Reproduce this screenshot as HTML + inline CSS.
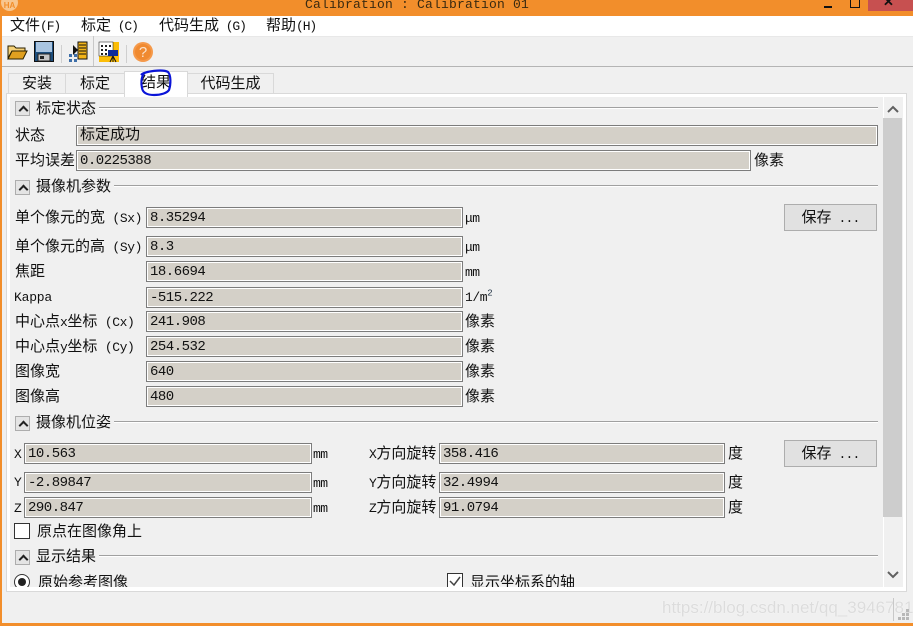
<!DOCTYPE html>
<html><head><meta charset="utf-8">
<style>
html,body{margin:0;padding:0;width:913px;height:626px;overflow:hidden;background:#f0f0f0}
*{box-sizing:border-box}
body{position:relative;font-family:"Liberation Mono","WenQuanYi Zen Hei","Noto Sans CJK SC",monospace;font-size:15px;color:#111}
.a{position:absolute;white-space:nowrap;line-height:28px;transform:translateY(2px)}
.a.n{line-height:26px;transform:translateY(1px)}
.a.z{transform:none}
.e{font-size:13px;letter-spacing:-.4px}
.f{position:absolute;background:#d4d0c8;border:1px solid #7c7c7c;box-shadow:inset 0 0 0 1px #fff;height:21px;padding-left:3px;line-height:20px;font-size:14px;white-space:nowrap;letter-spacing:-.5px}
.f.c{font-size:15px;letter-spacing:0}
.b{position:absolute;width:15px;height:15px;background:#e4e4e4;border:1px solid #adadad}
.b:after{content:"";position:absolute;left:4px;top:5px;width:5px;height:5px;border-left:2px solid #222;border-top:2px solid #222;transform:rotate(45deg)}
.l{position:absolute;height:2px;background:linear-gradient(#a0a0a0 50%,#fff 50%)}
.btn{position:absolute;left:784px;width:93px;height:27px;background:#e1e1e1;border:1px solid #adadad;text-align:center;line-height:27px;font-size:15px;white-space:nowrap}
.btn span{font-size:13px;letter-spacing:-.8px}
.t{position:absolute;top:73px;height:21px;background:#f0f0f0;border:1px solid #d9d9d9;border-bottom:0;text-align:center;line-height:21px;font-size:15px}
.u{font-size:13px;letter-spacing:-.5px}
.m{font-size:13px;letter-spacing:-1.100px}
</style></head><body>
<!-- window frame -->
<div style="position:absolute;left:0;top:0;width:913px;height:16px;background:#f28e2b"></div>
<div style="position:absolute;left:0;top:0;width:2px;height:626px;background:#f28e2b"></div>
<div style="position:absolute;left:0;top:623px;width:913px;height:3px;background:#f28e2b"></div>
<div style="position:absolute;left:2px;top:16px;width:911px;height:20px;background:#fff"></div>
<div style="position:absolute;left:2px;top:36px;width:911px;height:1px;background:#e8e8e8"></div>
<div style="position:absolute;left:2px;top:66px;width:911px;height:1px;background:#b4b4b4"></div>
<div style="position:absolute;left:1px;top:-6px;width:17px;height:17px;border-radius:50%;background:#f8c68e;color:#f28e2b;font:bold 8px/17px 'Liberation Sans',sans-serif;text-align:center"><span style="position:relative;top:3px">HA</span></div>
<div class="a z" style="left:305px;top:-7px;line-height:24px;font-size:13px;color:#3a2a10;letter-spacing:.2px">Calibration : Calibration 01</div>
<div style="position:absolute;left:824px;top:6px;width:8px;height:2px;background:#111"></div>
<div style="position:absolute;left:850px;top:-2px;width:10px;height:10px;border:1px solid #111"></div>
<div style="position:absolute;left:868px;top:0;width:45px;height:11px;background:#c75050;color:#111;text-align:center;font:bold 13px/8px 'Liberation Sans',sans-serif;overflow:hidden"><span style="position:relative;top:-2px;left:-2px">✕</span></div>
<!-- menu -->
<div class="a n" style="left:10px;top:13px">文件<span class="m">(F)</span></div>
<div class="a n" style="left:81px;top:13px">标定<span class="m"> (C)</span></div>
<div class="a n" style="left:159px;top:13px">代码生成<span class="m"> (G)</span></div>
<div class="a n" style="left:266px;top:13px">帮助<span class="m">(H)</span></div>
<!-- toolbar -->
<svg style="position:absolute;left:0;top:36px" width="170" height="30">
<path d="M8 22V10h6l2 2h9v3H12l-4 7z" fill="#f5d178" stroke="#2a2000"/>
<path d="M8 23l4-8h15l-4 8z" fill="#e0a020" stroke="#2a2000"/>
<rect x="34.500" y="5.500" width="19" height="20" fill="#1d4e7d" stroke="#111"/>
<rect x="36" y="6" width="16" height="10" fill="#a9c4e0"/>
<rect x="38" y="18" width="12" height="7" fill="#c6c6c6" stroke="#222"/>
<rect x="40" y="20" width="4" height="3" fill="#222"/>
<rect x="61" y="9" width="1" height="18" fill="#cfcfcf"/>
<rect x="78" y="6" width="9" height="17" fill="#f3b51a" stroke="#111"/>
<path d="M79 9h7M79 12h7M79 15h7M79 18h7" stroke="#111"/>
<path d="M73 9l5 5-5 5z" fill="#111"/>
<path d="M69 18h3v3h-3zM74 18h3v3h-3zM69 23h3v3h-3zM74 23h3v3h-3z" fill="#3d6ea8"/>
<rect x="93" y="0" width="1" height="30" fill="#c8c8c8"/>
<rect x="99" y="6" width="20" height="20" fill="#fbbd08"/>
<rect x="99" y="6" width="14" height="14" fill="#fff" stroke="#111" stroke-width=".5"/>
<path d="M101 9h2v2h-2zM105 9h2v2h-2zM109 9h2v2h-2zM101 13h2v2h-2zM105 13h2v2h-2zM101 17h2v2h-2zM105 17h2v2h-2z" fill="#222"/>
<rect x="108" y="14" width="10" height="6" fill="#0a2a9a"/>
<path d="M113 20l-3 6M113 20l3 6M113 20v6" stroke="#111"/>
<rect x="126" y="9" width="1" height="18" fill="#cfcfcf"/>
<circle cx="143" cy="16" r="10" fill="#f5994a"/>
<circle cx="143" cy="16" r="8" fill="#f08a30"/>
<text x="143" y="21" font-family="Liberation Sans" font-size="15" fill="#fbe3cc" text-anchor="middle">?</text>
</svg>
<!-- tabs -->
<div class="t" style="left:8px;width:58px">安装</div>
<div class="t" style="left:65px;width:60px">标定</div>
<div class="t" style="left:187px;width:87px">代码生成</div>
<!-- pane -->
<div style="position:absolute;left:6px;top:93px;width:901px;height:499px;background:#fff;border:1px solid #d9d9d9"></div>
<div style="position:absolute;left:10px;top:97px;width:893px;height:490px;background:#f0f0f0;overflow:hidden" id="c"></div>
<div class="t" style="left:124px;width:64px;top:71px;height:26px;background:#fff;line-height:24px">结果</div>
<svg style="position:absolute;left:135px;top:66px" width="40" height="34"><path d="M6 9C10 5 28 3 33 6c3 3 3 12 1 18-2 3-8 5-15 5-5 0-11-1-12-7-1-4-1-10 2-15" fill="none" stroke="#0a14d8" stroke-width="2.200"/></svg>
<!-- scrollbar -->
<div style="position:absolute;left:883px;top:97px;width:20px;height:490px;background:#f0f0f0;border-left:1px solid #fff"></div>
<div style="position:absolute;left:883px;top:118px;width:19px;height:399px;background:#cdcdcd"></div>
<svg style="position:absolute;left:883px;top:97px" width="20" height="490"><path d="M5 15l5-5 5 5" fill="none" stroke="#606060" stroke-width="2"/><path d="M5 475l5 5 5-5" fill="none" stroke="#606060" stroke-width="2"/></svg>
<!-- section 1 -->
<div class="b" style="left:15px;top:101px"></div>
<div class="a" style="left:36px;top:94px">标定状态</div>
<div class="l" style="left:99px;top:107px;width:779px"></div>
<div class="a" style="left:15px;top:121px">状态</div>
<div class="f c" style="left:76px;top:125px;width:802px">标定成功</div>
<div class="a" style="left:15px;top:146px">平均误差</div>
<div class="f" style="left:76px;top:150px;width:675px">0.0225388</div>
<div class="a" style="left:754px;top:146px">像素</div>
<!-- section 2 -->
<div class="b" style="left:15px;top:180px"></div>
<div class="a" style="left:36px;top:172px">摄像机参数</div>
<div class="l" style="left:114px;top:185px;width:764px"></div>
<div class="a" style="left:15px;top:203px">单个像元的宽<span class="e"> (Sx)</span></div>
<div class="f" style="left:146px;top:207px;width:317px">8.35294</div>
<div class="a n u" style="left:465px;top:205px">μm</div>
<div class="btn" style="top:204px">保存<span> ...</span></div>
<div class="a" style="left:15px;top:232px">单个像元的高<span class="e"> (Sy)</span></div>
<div class="f" style="left:146px;top:236px;width:317px">8.3</div>
<div class="a n u" style="left:465px;top:234px">μm</div>
<div class="a" style="left:15px;top:257px">焦距</div>
<div class="f" style="left:146px;top:261px;width:317px">18.6694</div>
<div class="a n u" style="left:465px;top:259px">mm</div>
<div class="a n" style="left:14px;top:284px;font-size:13px;letter-spacing:-.2px">Kappa</div>
<div class="f" style="left:146px;top:287px;width:317px">-515.222</div>
<div class="a n" style="left:465px;top:284px;font-size:13px;letter-spacing:-.4px">1/m<sup style="font-size:9px;line-height:0;color:#234">2</sup></div>
<div class="a" style="left:15px;top:307px">中心点<span class="e">x</span>坐标<span class="e"> (Cx)</span></div>
<div class="f" style="left:146px;top:311px;width:317px">241.908</div>
<div class="a" style="left:465px;top:307px">像素</div>
<div class="a" style="left:15px;top:332px">中心点<span class="e">y</span>坐标<span class="e"> (Cy)</span></div>
<div class="f" style="left:146px;top:336px;width:317px">254.532</div>
<div class="a" style="left:465px;top:332px">像素</div>
<div class="a" style="left:15px;top:357px">图像宽</div>
<div class="f" style="left:146px;top:361px;width:317px">640</div>
<div class="a" style="left:465px;top:357px">像素</div>
<div class="a" style="left:15px;top:382px">图像高</div>
<div class="f" style="left:146px;top:386px;width:317px">480</div>
<div class="a" style="left:465px;top:382px">像素</div>
<!-- section 3 -->
<div class="b" style="left:15px;top:416px"></div>
<div class="a" style="left:36px;top:408px">摄像机位姿</div>
<div class="l" style="left:114px;top:421px;width:764px"></div>
<div class="a n" style="left:14px;top:441px;font-size:13px">X</div>
<div class="f" style="left:24px;top:443px;width:288px">10.563</div>
<div class="a n u" style="left:313px;top:441px">mm</div>
<div class="a" style="left:369px;top:439px"><span class="e">X</span>方向旋转</div>
<div class="f" style="left:439px;top:443px;width:286px">358.416</div>
<div class="a" style="left:728px;top:439px">度</div>
<div class="btn" style="top:440px">保存<span> ...</span></div>
<div class="a n" style="left:14px;top:469px;font-size:13px">Y</div>
<div class="f" style="left:24px;top:472px;width:288px">-2.89847</div>
<div class="a n u" style="left:313px;top:470px">mm</div>
<div class="a" style="left:369px;top:468px"><span class="e">Y</span>方向旋转</div>
<div class="f" style="left:439px;top:472px;width:286px">32.4994</div>
<div class="a" style="left:728px;top:468px">度</div>
<div class="a n" style="left:14px;top:495px;font-size:13px">Z</div>
<div class="f" style="left:24px;top:497px;width:288px">290.847</div>
<div class="a n u" style="left:313px;top:495px">mm</div>
<div class="a" style="left:369px;top:493px"><span class="e">Z</span>方向旋转</div>
<div class="f" style="left:439px;top:497px;width:286px">91.0794</div>
<div class="a" style="left:728px;top:493px">度</div>
<div style="position:absolute;left:14px;top:523px;width:16px;height:16px;background:#fff;border:1px solid #333"></div>
<div class="a" style="left:37px;top:517px">原点在图像角上</div>
<!-- section 4 -->
<div class="b" style="left:15px;top:550px"></div>
<div class="a" style="left:36px;top:542px">显示结果</div>
<div class="l" style="left:99px;top:555px;width:779px"></div>
<!-- clipped bottom row -->
<div style="position:absolute;left:10px;top:565px;width:870px;height:22px;overflow:hidden">
<div style="position:absolute;left:4px;top:9px;width:16px;height:16px;border-radius:50%;background:#fff;border:1px solid #333"></div>
<div style="position:absolute;left:8px;top:13px;width:8px;height:8px;border-radius:50%;background:#222"></div>
<div class="a" style="left:28px;top:3px">原始参考图像</div>
<div style="position:absolute;left:437px;top:8px;width:16px;height:16px;background:#fff;border:1px solid #333"></div>
<svg style="position:absolute;left:437px;top:8px" width="16" height="16"><path d="M3 8l4 4 6-8" fill="none" stroke="#444" stroke-width="1.500"/></svg>
<div class="a" style="left:460px;top:3px">显示坐标系的轴</div>
</div>
<!-- watermark -->
<div class="a z" style="left:662px;top:598px;font:17px/20px 'Liberation Sans',sans-serif;color:#dcdcdc;text-shadow:0 0 1px #fff">https://blog.csdn.net/qq_39467811</div>
<div style="position:absolute;left:893px;top:598px;width:1px;height:23px;background:#c8c8c8"></div>
<svg style="position:absolute;left:898px;top:607px" width="14" height="16"><path d="M8 2h3v3H8zM4 6h3v3H4zM8 6h3v3H8zM0 10h3v3H0zM4 10h3v3H4zM8 10h3v3H8z" fill="#b8b8b8"/></svg>
</body></html>
